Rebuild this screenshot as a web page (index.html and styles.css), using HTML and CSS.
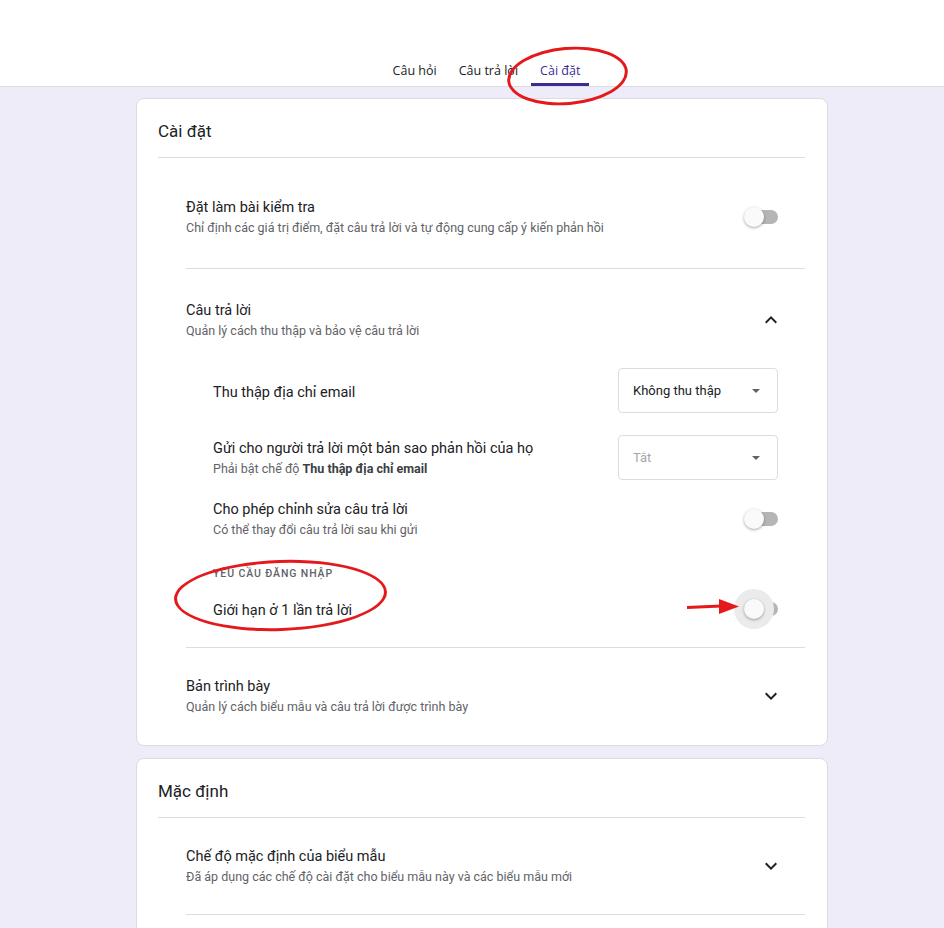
FILE: index.html
```html
<!DOCTYPE html>
<html lang="vi">
<head>
  <meta charset="UTF-8">
  <title>Cài đặt - Biểu mẫu</title>
  <meta name="viewport" content="width=device-width, initial-scale=1">
  <link rel="stylesheet" href="styles.css">
</head>
<body>
  <header class="topbar">
    <nav class="tabs">
      <a class="tab">Câu hỏi</a>
      <a class="tab">Câu trả lời</a>
      <a class="tab active">Cài đặt</a>
    </nav>
  </header>

  <main class="content">
    <section class="card">
      <h2 class="card-title">Cài đặt</h2>

      <div class="section quiz">
        <div class="row">
          <div class="text">
            <div class="title">Đặt làm bài kiểm tra</div>
            <div class="sub">Chỉ định các giá trị điểm, đặt câu trả lời và tự động cung cấp ý kiến phản hồi</div>
          </div>
          <span class="switch"><span class="thumb"></span></span>
        </div>
      </div>

      <div class="section responses">
        <div class="row">
          <div class="text">
            <div class="title">Câu trả lời</div>
            <div class="sub">Quản lý cách thu thập và bảo vệ câu trả lời</div>
          </div>
          <svg class="chevron" viewBox="0 0 24 24"><path d="M12 8l-6 6 1.41 1.41L12 10.83l4.59 4.58L18 14z"/></svg>
        </div>

        <div class="subrows">
          <div class="row email">
            <div class="title">Thu thập địa chỉ email</div>
            <div class="select">
              <span>Không thu thập</span>
              <span class="caret"></span>
            </div>
          </div>
          <div class="row copy">
            <div class="text">
              <div class="title">Gửi cho người trả lời một bản sao phản hồi của họ</div>
              <div class="sub">Phải bật chế độ <b>Thu thập địa chỉ email</b></div>
            </div>
            <div class="select disabled">
              <span>Tắt</span>
              <span class="caret"></span>
            </div>
          </div>
          <div class="row edit">
            <div class="text">
              <div class="title">Cho phép chỉnh sửa câu trả lời</div>
              <div class="sub">Có thể thay đổi câu trả lời sau khi gửi</div>
            </div>
            <span class="switch"><span class="thumb"></span></span>
          </div>
          <div class="group-label">Yêu cầu đăng nhập</div>
          <div class="row limit">
            <div class="title">Giới hạn ở 1 lần trả lời</div>
            <span class="switch hover"><span class="thumb"></span></span>
          </div>
        </div>
      </div>

      <div class="section last">
        <div class="row">
          <div class="text">
            <div class="title">Bản trình bày</div>
            <div class="sub">Quản lý cách biểu mẫu và câu trả lời được trình bày</div>
          </div>
          <svg class="chevron" viewBox="0 0 24 24"><path d="M16.59 8.59L12 13.17 7.41 8.59 6 10l6 6 6-6z"/></svg>
        </div>
      </div>
    </section>

    <section class="card more">
      <h2 class="card-title">Mặc định</h2>
      <div class="section">
        <div class="row">
          <div class="text">
            <div class="title">Chế độ mặc định của biểu mẫu</div>
            <div class="sub">Đã áp dụng các chế độ cài đặt cho biểu mẫu này và các biểu mẫu mới</div>
          </div>
          <svg class="chevron" viewBox="0 0 24 24"><path d="M16.59 8.59L12 13.17 7.41 8.59 6 10l6 6 6-6z"/></svg>
        </div>
      </div>
    </section>
  </main>

  <!-- red marker notes drawn on top -->
  <div class="mark mark-tab"></div>
  <div class="mark mark-login"></div>
  <svg class="arrow" viewBox="0 0 54 20">
    <path d="M0 10.5 L34 9" stroke="#e4191c" stroke-width="3" fill="none"/>
    <path d="M32 2 L52 9.5 L32 17 Z" fill="#e4191c"/>
  </svg>
</body>
</html>
```

FILE: styles.css
```css
body {
  margin: 0;
  background: #efecf9;
  font-family: Roboto, "Liberation Sans", Arial, sans-serif;
  color: #202124;
  position: relative;
  height: 928px;
  overflow: hidden;
}

/* top bar with tabs */
.topbar {
  background: #fff;
  height: 86px;
  border-bottom: 1px solid #dadce0;
  display: flex;
  align-items: flex-end;
  justify-content: center;
  padding-left: 29px;
}
.tabs {
  display: flex;
  gap: 4px;
}
.tab {
  font-family: "Open Sans", Roboto, sans-serif;
  font-size: 12.5px;
  font-weight: 500;
  color: #202124;
  padding: 0 9px;
  height: 27px;
  line-height: 24px;
  box-sizing: border-box;
  border-bottom: 3px solid transparent;
}
.tab.active {
  color: #3b2d96;
  border-bottom-color: #3b2d96;
}

/* cards */
.content {
  width: 692px;
  margin: 11px 0 0 136px;
  display: flex;
  flex-direction: column;
  gap: 12px;
}
.card {
  background: #fff;
  border: 1px solid #dadce0;
  border-radius: 8px;
  padding: 0 22px;
}
.card.more { padding-bottom: 40px; }
.card-title {
  margin: 0;
  font-size: 17px;
  font-weight: 400;
  line-height: 24px;
  padding: 20px 0 14px;
  margin-left: -1px;
  border-bottom: 1px solid #dadce0;
}
.section {
  margin-left: 27px;
  padding: 27px 28px 28px 0;
  border-bottom: 1px solid #dadce0;
}
.section.quiz { padding-top: 38px; padding-bottom: 31px; }
.section.responses { padding-top: 30px; padding-bottom: 18px; }
.section.last { border-bottom: none; padding-bottom: 29px; }

.row {
  display: flex;
  align-items: center;
  justify-content: space-between;
}
.title {
  font-size: 14.5px;
  line-height: 20px;
  padding-top: 2px;
  margin-bottom: -2px;
}
.sub {
  font-size: 12.5px;
  line-height: 20px;
  padding-top: 1px;
  margin-top: 1px;
  margin-bottom: -1px;
  color: #5f6368;
}
.sub b {
  color: #3c4043;
  font-weight: 700;
}
.chevron {
  width: 24px;
  height: 24px;
  margin-right: -6px;
  fill: #202124;
}

/* nested rows of the responses block */
.subrows {
  margin-left: 27px;
  margin-top: 28px;
}
.row.copy { margin-top: 22px; }
.row.edit { margin-top: 18px; }
.row.limit { margin-top: 9px; }
.group-label {
  margin-top: 25px;
  padding-top: 2px;
  margin-bottom: -2px;
  font-size: 10.5px;
  line-height: 16px;
  font-weight: 500;
  letter-spacing: 0.9px;
  text-transform: uppercase;
  color: #5f6368;
}

.select {
  width: 160px;
  height: 45px;
  box-sizing: border-box;
  border: 1px solid #dadce0;
  border-radius: 4px;
  padding: 0 17px 0 14px;
  display: flex;
  align-items: center;
  justify-content: space-between;
  font-size: 13px;
  margin-right: -1px;
}
.select.disabled { color: #a5a7aa; }
.caret {
  width: 0;
  height: 0;
  border-left: 4px solid transparent;
  border-right: 4px solid transparent;
  border-top: 4px solid #5f6368;
}

/* switches */
.switch {
  position: relative;
  width: 32px;
  height: 14px;
  margin-right: -1px;
  border-radius: 7px;
  background: #b5b5b5;
  flex: none;
}
.thumb {
  position: absolute;
  left: -2px;
  top: -3px;
  width: 20px;
  height: 20px;
  border-radius: 50%;
  background: #fafafa;
  box-shadow: 0 1px 3px rgba(0,0,0,0.35);
}
.switch.hover { margin-top: 13px; margin-bottom: 13px; }
.switch.hover::before {
  content: "";
  position: absolute;
  left: -12px;
  top: -13px;
  width: 40px;
  height: 40px;
  border-radius: 50%;
  background: #ebebeb;
}

/* annotations */
.mark {
  position: absolute;
  border: 3px solid #e4191c;
  border-radius: 50%;
  box-sizing: border-box;
}
.mark-tab {
  left: 507px;
  top: 47px;
  width: 121px;
  height: 58px;
  transform: rotate(-5deg);
}
.mark-login {
  left: 174px;
  top: 560px;
  width: 213px;
  height: 71px;
  transform: rotate(-2deg);
}
.arrow {
  position: absolute;
  left: 687px;
  top: 597px;
  width: 54px;
  height: 20px;
}
```
